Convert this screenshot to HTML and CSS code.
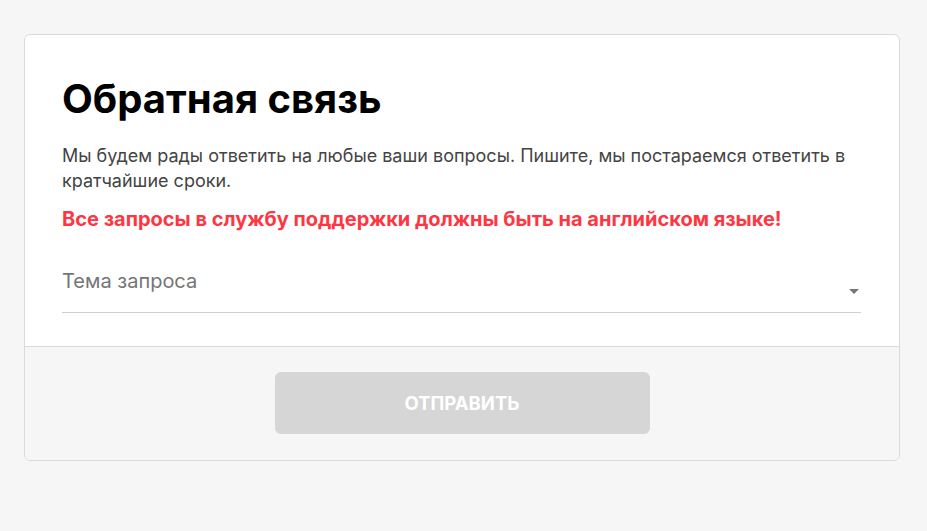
FILE: index.html
```html
<!DOCTYPE html>
<html lang="ru">
<head>
<meta charset="utf-8">
<link rel="stylesheet" href="styles.css">
</head>
<body>
<div class="card">
  <div class="card-body">
    <h1 class="title">Обратная связь</h1>
    <p class="lead">Мы будем рады ответить на любые ваши вопросы. Пишите, мы постараемся ответить в кратчайшие сроки.</p>
    <p class="warn">Все запросы в службу поддержки должны быть на английском языке!</p>
    <div class="select">
      <span class="placeholder">Тема запроса</span>
      <svg class="caret" width="10" height="5" viewBox="0 0 10 5"><path d="M0 0h10L5 5z" fill="#777"/></svg>
    </div>
  </div>
  <div class="card-footer">
    <button class="submit" disabled>ОТПРАВИТЬ</button>
  </div>
</div>
</body>
</html>
```
FILE: styles.css
```css
html, body { margin: 0; padding: 0; }
body {
  background: #f6f6f6;
  font-family: Inter, "Noto Sans", sans-serif;
  padding: 34px 27px 0 24px;
}
.card {
  background: #fff;
  border: 1px solid #dadada;
  border-radius: 6px;
  overflow: hidden;
}
.card-body {
  padding: 40px 38px 33px 37px;
}
.title {
  margin: 0;
  font-size: 40px;
  font-weight: 700;
  line-height: 48px;
  color: #000;
}
.lead {
  margin: 20px 0 0;
  font-size: 18px;
  line-height: 25px;
  color: #444;
}
.warn {
  margin: 14px 0 0;
  font-size: 20px;
  font-weight: 700;
  line-height: 25px;
  color: #ff3642;
}
.select {
  margin-top: 37px;
  display: flex;
  align-items: flex-end;
  justify-content: space-between;
  border-bottom: 1px solid #cfcfcf;
  padding: 0 2px 14px 0;
}
.placeholder {
  font-size: 20px;
  line-height: 24px;
  color: #757575;
  padding-bottom: 5px;
}
.caret { margin-bottom: 4px; }
.card-footer {
  background: #f6f6f6;
  border-top: 1px solid #d9d9d9;
  padding: 25px 0 26px;
  display: flex;
  justify-content: center;
}
.submit {
  width: 375px;
  height: 62px;
  border: none;
  border-radius: 6px;
  background: #d6d6d6;
  color: #fff;
  font-family: Inter, "Noto Sans", sans-serif;
  font-size: 18.5px;
  font-weight: 700;
}
```
